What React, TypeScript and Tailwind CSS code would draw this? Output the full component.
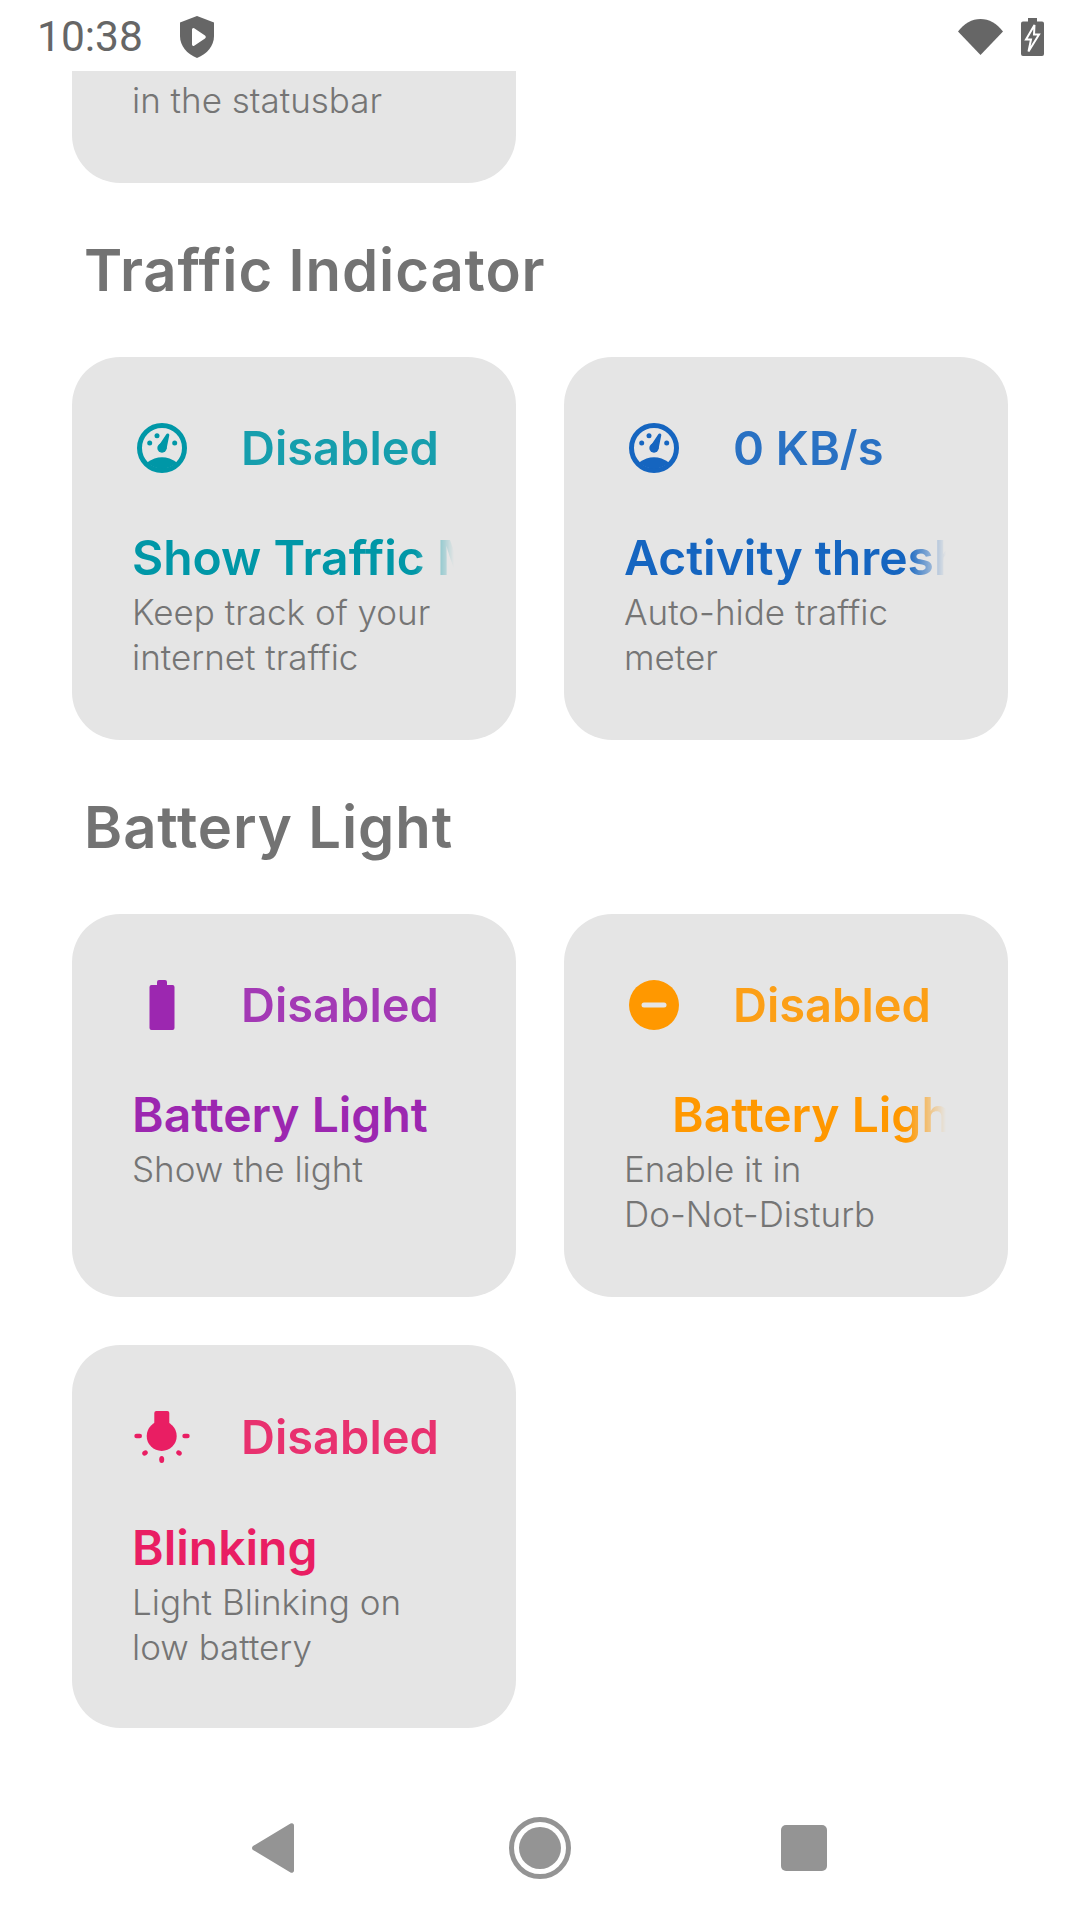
import type { ReactNode } from 'react'

const card = 'h-[383px] rounded-[48px] bg-[#e5e5e5] pl-[60px] pt-[66px] font-[Inter,sans-serif]'

function Gauge() {
  return (
    <svg viewBox="0 0 50 50" className="h-[50px] w-[50px] fill-current">
      <circle cx="25" cy="25" r="22.500" fill="none" stroke="currentColor" strokeWidth="5" />
      <path d="M10 39.500Q25 29 40 39.500A22 22 0 0 1 10 39.500Z" />
      <circle cx="12.700" cy="20" r="2.500" />
      <circle cx="37.700" cy="20" r="2.500" />
      <circle cx="20" cy="12.700" r="2.500" />
      <circle cx="25" cy="25" r="4.700" />
      <path d="M21.500 23L29.300 11.300a1.600 1.600 0 0 1 3 1L29.500 26Z" />
    </svg>
  )
}

function BatteryIcon() {
  return (
    <svg viewBox="0 0 50 50" className="h-[50px] w-[50px] fill-current">
      <path d="M20 5V2a2 2 0 0 1 2-2h6a2 2 0 0 1 2 2v3h5.500a2 2 0 0 1 2 2v41a2 2 0 0 1-2 2h-21a2 2 0 0 1-2-2V7a2 2 0 0 1 2-2Z" />
    </svg>
  )
}

function DndIcon() {
  return (
    <svg viewBox="0 0 50 50" className="h-[50px] w-[50px] fill-current">
      <circle cx="25" cy="25" r="25" />
      <rect x="12.500" y="22.500" width="25" height="5" rx="2.500" fill="#e5e5e5" />
    </svg>
  )
}

function LightIcon() {
  return (
    <svg viewBox="0 0 50 52" className="h-[52px] w-[50px] overflow-visible fill-current">
      <circle cx="24.700" cy="25" r="15" />
      <path d="M17.300 15V2a2 2 0 0 1 2-2h11a2 2 0 0 1 2 2v13Z" />
      <rect x="-2.700" y="22.700" width="7.700" height="4.600" rx="2.300" />
      <rect x="45.300" y="22.700" width="7.400" height="4.600" rx="2.300" />
      <ellipse cx="24.700" cy="48.500" rx="2.500" ry="3.500" />
      <ellipse cx="8" cy="42" rx="2.900" ry="2.400" transform="rotate(-35 8 42)" />
      <ellipse cx="42" cy="42" rx="2.900" ry="2.400" transform="rotate(35 42 42)" />
    </svg>
  )
}

type TileProps = {
  icon: ReactNode
  color: string
  status: string
  title: string
  sub: ReactNode
  indent?: string
  fade?: boolean
}

function Tile({ icon, color, status, title, sub, indent = '', fade = true }: TileProps) {
  return (
    <div className={card}>
      <div className={`flex items-center ${color}`}>
        <div className="ml-[5px] w-[50px]">{icon}</div>
        <span className="ml-[54px] text-[47px] leading-[50px] font-semibold opacity-90">{status}</span>
      </div>
      <div
        className={`mt-[57px] w-[322px] overflow-hidden whitespace-nowrap text-[48px] leading-[56px] font-semibold ${color} ${fade ? '[mask-image:linear-gradient(to_right,black_88%,transparent)]' : ''}`}
      >
        <span className={indent}>{title}</span>
      </div>
      <p className="mt-[4px] text-[35px] leading-[45px] font-light text-[#757575]">{sub}</p>
    </div>
  )
}

function SectionTitle({ children }: { children: ReactNode }) {
  return (
    <h2 className="flex h-[174px] items-center pl-[12px] font-[Inter,sans-serif] text-[58px] font-semibold tracking-[0.9px] text-[#737373]">
      {children}
    </h2>
  )
}

export default function App() {
  return (
    <div className="flex h-[1920px] w-[1080px] flex-col overflow-hidden bg-white">
      {/* status bar */}
      <div className="flex h-[72px] shrink-0 items-center pl-[37px] pr-[36px] pt-[2px] text-[#666666]">
        <span className="font-[Roboto,sans-serif] text-[42.500px] leading-none">10:38</span>
        <svg viewBox="0 0 34 42" className="ml-[37px] h-[42px] w-[34px] fill-current">
          <path d="M17 0L34 6.500V20C34 30 27 38 17 42C7 38 0 30 0 20V6.500Z" />
          <path d="M12 13.500a1.500 1.500 0 0 1 2.200-1.300L25 19.500a1.800 1.800 0 0 1 0 3L14.200 29.800a1.500 1.500 0 0 1-2.200-1.300Z" fill="#ffffff" />
        </svg>
        <div className="ml-auto flex items-center">
          <svg viewBox="0 0 45 36" className="h-[36px] w-[45px] fill-current">
            <path d="M0 12.500C6 4.500 14 0 22.500 0S39 4.500 45 12.500L22.500 36Z" />
          </svg>
          <svg viewBox="0 0 23 38" className="ml-[18px] h-[38px] w-[23px] fill-current">
            <path d="M7 3.500V0h9v3.500h5a2 2 0 0 1 2 2V36a2 2 0 0 1-2 2H2a2 2 0 0 1-2-2V5.500a2 2 0 0 1 2-2Z" />
            <path d="M13.500 7L5 21.500h5L7.500 33.500L18 16.500h-5Z" fill="#666666" stroke="#ffffff" strokeWidth="2" />
          </svg>
        </div>
      </div>

      <div className="flex-1 px-[72px]">
        {/* tail of the card scrolled under the status bar */}
        <div className="grid grid-cols-2 gap-[48px]">
          <div className="-mt-px h-[112px] rounded-b-[48px] bg-[#e5e5e5] pl-[60px] pt-[7px] font-[Inter,sans-serif]">
            <p className="text-[35px] leading-[45px] font-light text-[#757575]">in the statusbar</p>
          </div>
        </div>

        <SectionTitle>Traffic Indicator</SectionTitle>
        <div className="grid grid-cols-2 gap-[48px]">
          <Tile
            icon={<Gauge />}
            color="text-[#0097a7]"
            status="Disabled"
            title="Show Traffic Meter"
            sub={<>Keep track of your<br />internet traffic</>}
          />
          <Tile
            icon={<Gauge />}
            color="text-[#1565c0]"
            status="0 KB/s"
            title="Activity threshold"
            sub={<>Auto-hide traffic<br />meter</>}
          />
        </div>

        <SectionTitle>Battery Light</SectionTitle>
        <div className="grid grid-cols-2 gap-[48px]">
          <Tile
            icon={<BatteryIcon />}
            color="text-[#9c27b0]"
            status="Disabled"
            title="Battery Light"
            sub="Show the light"
            fade={false}
          />
          <Tile
            icon={<DndIcon />}
            color="text-[#ff9800]"
            status="Disabled"
            title="Battery Light"
            sub={<>Enable it in<br />Do-Not-Disturb</>}
            indent="ml-[48px]"
          />
          <Tile
            icon={<LightIcon />}
            color="text-[#e91e63]"
            status="Disabled"
            title="Blinking"
            sub={<>Light Blinking on<br />low battery</>}
            fade={false}
          />
        </div>
      </div>

      {/* nav bar */}
      <div className="flex h-[144px] shrink-0 items-center pl-[252px] text-[#949494]">
        <svg viewBox="0 0 42 50" className="h-[50px] w-[42px] fill-current">
          <path d="M38.500.5a2.300 2.300 0 0 1 3.500 2V47.500a2.300 2.300 0 0 1-3.500 2L1 27a2.500 2.500 0 0 1 0-4Z" />
        </svg>
        <div className="ml-[215px] flex h-[62px] w-[62px] items-center justify-center rounded-full border-[5px] border-[#949494]">
          <div className="h-[42px] w-[42px] rounded-full bg-[#949494]" />
        </div>
        <div className="ml-[210px] h-[46px] w-[46px] rounded-[5px] bg-[#949494]" />
      </div>
    </div>
  )
}
